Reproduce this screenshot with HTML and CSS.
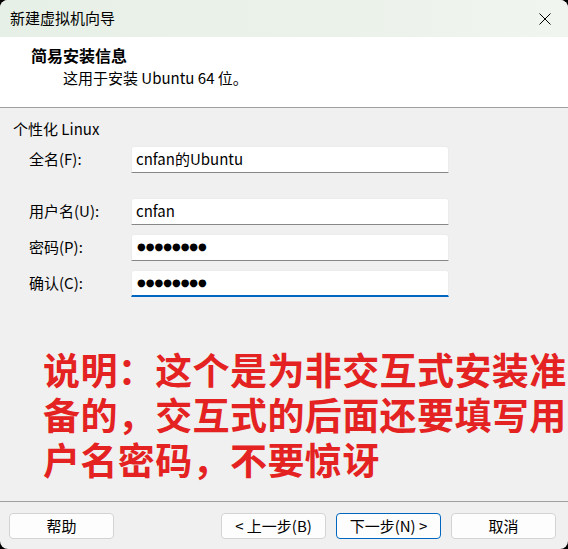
FILE: index.html
```html
<!DOCTYPE html>
<html lang="zh-CN">
  <head>
    <meta charset="UTF-8" />
    <meta name="viewport" content="width=device-width, initial-scale=1.0" />
    <title>新建虚拟机向导</title>
    <link rel="stylesheet" href="styles.css">
  </head>

  <body>
    <div class="window">
      <div class="titlebar">
        <span class="title">新建虚拟机向导</span>
        <button class="close" title="关闭">
          <svg width="12" height="12" viewBox="0 0 12 12">
            <path d="M0.5 0.5 L11.5 11.5 M11.5 0.5 L0.5 11.5" stroke="#000" stroke-width="1" fill="none" />
          </svg>
        </button>
      </div>

      <div class="header">
        <h1>简易安装信息</h1>
        <p>这用于安装 Ubuntu 64 位。</p>
      </div>

      <div class="content">
        <div class="group-title">个性化 Linux</div>

        <div class="row row-first">
          <label>全名(F):</label>
          <div class="field">cnfan的Ubuntu</div>
        </div>

        <div class="row row-spaced">
          <label>用户名(U):</label>
          <div class="field">cnfan</div>
        </div>

        <div class="row">
          <label>密码(P):</label>
          <div class="field dots">●●●●●●●●</div>
        </div>

        <div class="row">
          <label>确认(C):</label>
          <div class="field dots focused">●●●●●●●●</div>
        </div>

        <p class="note">说明：这个是为非交互式安装准备的，交互式的后面还要填写用户名密码，不要惊讶</p>
      </div>

      <div class="footer">
        <button class="btn">帮助</button>
        <div class="nav">
          <button class="btn">&lt; 上一步(B)</button>
          <button class="btn primary">下一步(N) &gt;</button>
          <button class="btn">取消</button>
        </div>
      </div>
    </div>
  </body>
</html>
```

FILE: styles.css
```css
html,
body {
  margin: 0;
  padding: 0;
  background-color: #000;
}

body {
  font-family: "Noto Sans CJK SC", sans-serif;
  font-size: 15px;
  color: #000;
}

.window {
  width: 568px;
  height: 549px;
  background-color: #f0f0f0;
  border-radius: 8px;
  overflow: hidden;
  display: flex;
  flex-direction: column;
}

.titlebar {
  height: 37px;
  display: flex;
  align-items: center;
  justify-content: space-between;
  padding-left: 10px;
  background: linear-gradient(90deg, #e7f0e6 0%, #ebf2ea 60%, #f1f5f0 100%);
}

.title {
  line-height: 20px;
  margin-top: -2px;
}

.close {
  width: 46px;
  height: 37px;
  border: none;
  background: none;
  padding: 0;
  display: flex;
  align-items: center;
  justify-content: center;
}

.header {
  height: 71px;
  box-sizing: border-box;
  background-color: #fff;
  border-bottom: 1px solid #a0a0a0;
  padding: 7px 0 0 31px;
}

.header h1 {
  margin: 0;
  font-size: 16px;
  font-weight: 700;
  line-height: 22px;
}

.header p {
  margin: 1px 0 0 32px;
  line-height: 22px;
}

.content {
  flex: 1;
  padding: 11px 0 0 13px;
}

.group-title {
  line-height: 20px;
}

.row {
  display: flex;
  align-items: center;
  margin-top: 9px;
  padding-left: 16px;
}

.row-first {
  margin-top: 7px;
}

.row-spaced {
  margin-top: 25px;
}

.row label {
  width: 102px;
  line-height: 20px;
  margin-top: -2px;
}

.field {
  width: 318px;
  height: 27px;
  box-sizing: border-box;
  background-color: #fff;
  border: 1px solid #ececec;
  border-bottom-color: #878787;
  border-radius: 3px 3px 0 0;
  padding: 0 4px;
  line-height: 24px;
}

/* password bullets */
.dots {
  font-family: "DejaVu Sans", sans-serif;
  font-size: 10px;
  padding-left: 5px;
}

.focused {
  border-bottom: 2px solid #0067c0;
}

.note {
  margin: 50px 0 0 30px;
  font-size: 37px;
  font-weight: 700;
  line-height: 45px;
  letter-spacing: 0.4px;
  color: #e42222;
}

.footer {
  height: 48px;
  box-sizing: border-box;
  border-top: 1px solid #a0a0a0;
  padding: 11px 12px 0 9px;
  display: flex;
  justify-content: space-between;
  align-items: flex-start;
}

.nav {
  display: flex;
  gap: 10px;
}

.btn {
  width: 105px;
  height: 26px;
  font-family: "Noto Sans CJK SC", sans-serif;
  font-size: 15px;
  line-height: 20px;
  padding: 0;
  color: #000;
  background-color: #fdfdfd;
  border: 1px solid #d3d3d3;
  border-radius: 4px;
}

.primary {
  border-color: #0067c0;
}
```
